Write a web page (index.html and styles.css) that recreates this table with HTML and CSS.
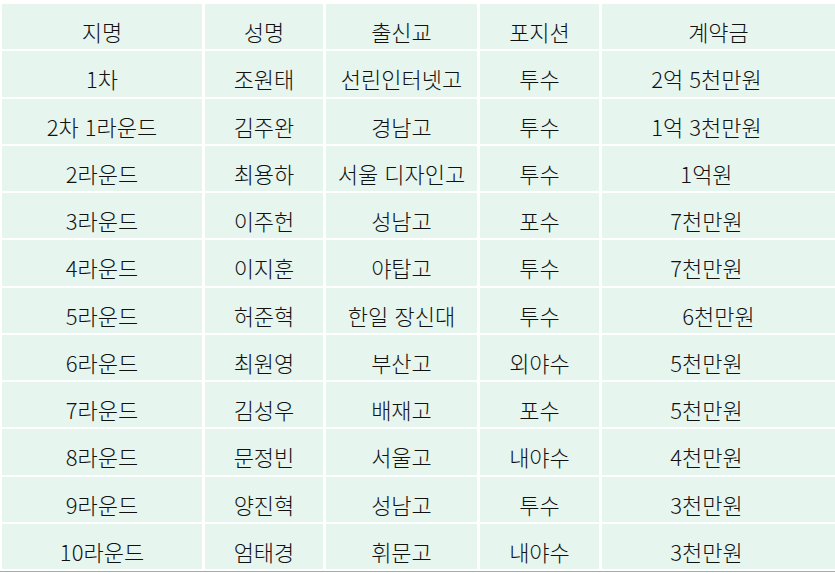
FILE: index.html
```html
<!DOCTYPE html>
<html lang="ko">
<head>
<meta charset="utf-8">
<link rel="stylesheet" href="styles.css">
</head>
<body>
<table class="draft">
  <colgroup>
    <col class="c1"><col class="c2"><col class="c3"><col class="c4"><col class="c5">
  </colgroup>
  <thead>
    <tr><th>지명</th><th>성명</th><th>출신교</th><th>포지션</th><th class="mid">계약금</th></tr>
  </thead>
  <tbody>
    <tr><td>1차</td><td>조원태</td><td>선린인터넷고</td><td>투수</td><td class="amt">2억 5천만원</td></tr>
    <tr><td>2차 1라운드</td><td>김주완</td><td>경남고</td><td>투수</td><td class="amt">1억 3천만원</td></tr>
    <tr><td>2라운드</td><td>최용하</td><td>서울 디자인고</td><td>투수</td><td class="amt">1억원</td></tr>
    <tr><td>3라운드</td><td>이주헌</td><td>성남고</td><td>포수</td><td class="amt">7천만원</td></tr>
    <tr><td>4라운드</td><td>이지훈</td><td>야탑고</td><td>투수</td><td class="amt">7천만원</td></tr>
    <tr><td>5라운드</td><td>허준혁</td><td>한일 장신대</td><td>투수</td><td class="mid">6천만원</td></tr>
    <tr><td>6라운드</td><td>최원영</td><td>부산고</td><td>외야수</td><td class="amt">5천만원</td></tr>
    <tr><td>7라운드</td><td>김성우</td><td>배재고</td><td>포수</td><td class="amt">5천만원</td></tr>
    <tr><td>8라운드</td><td>문정빈</td><td>서울고</td><td>내야수</td><td class="amt">4천만원</td></tr>
    <tr><td>9라운드</td><td>양진혁</td><td>성남고</td><td>투수</td><td class="amt">3천만원</td></tr>
    <tr><td>10라운드</td><td>엄태경</td><td>휘문고</td><td>내야수</td><td class="amt">3천만원</td></tr>
  </tbody>
</table>
</body>
</html>
```

FILE: styles.css
```css
html, body {
  margin: 0;
  padding: 0;
  background: #ffffff;
  overflow: hidden;
}

body {
  width: 835px;
  height: 573px;
  font-family: "Noto Sans CJK KR", "Noto Sans", sans-serif;
  color: #111111;
}

.draft {
  border-collapse: separate;
  border-spacing: 3px 2px;
  table-layout: fixed;
  width: 839px;
  margin: 2px 0 0 -1px;
  border-bottom: 1px solid #a9a9a9;
}

.c1 { width: 200px; }
.c2 { width: 118px; }
.c3 { width: 151px; }
.c4 { width: 119px; }
.c5 { width: 233px; }

.draft tr {
  height: 45.25px;
}

.draft th,
.draft td {
  background: #e6f5ee;
  font-size: 22px;
  font-weight: 300;
  line-height: 26px;
  text-align: center;
  vertical-align: top;
  padding: 14px 0 0 0;
  white-space: nowrap;
}

.draft td.amt {
  padding-right: 24px;
}
```
